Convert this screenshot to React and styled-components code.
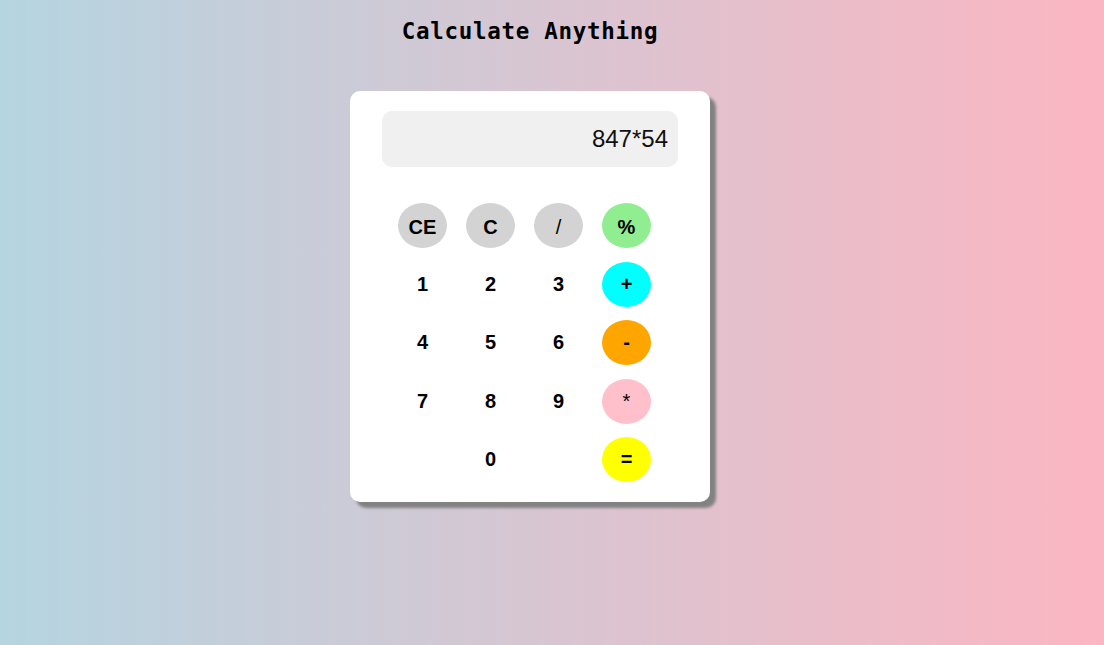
import React from "react";
import styled, { createGlobalStyle } from "styled-components";

const GlobalStyle = createGlobalStyle`
  html, body {
    margin: 0;
    padding: 0;
  }
  body {
    min-height: 645px;
    background: linear-gradient(to right, #b5d5e1, #fbb6c2);
    font-family: "Liberation Sans", Arial, sans-serif;
  }
`;

const Page = styled.div`
  width: 1060px;
  display: flex;
  flex-direction: column;
  align-items: center;
  min-height: 645px;
`;

const Title = styled.h1`
  margin: 17px 0 0;
  font-family: "DejaVu Sans Mono", monospace;
  font-size: 22.5px;
  letter-spacing: 0.7px;
  line-height: 28px;
  font-weight: bold;
  color: #000;
`;

const Card = styled.div`
  margin-top: 46px;
  width: 360px;
  box-sizing: border-box;
  padding: 20px 32px 20px;
  background: #fff;
  border-radius: 10px;
  box-shadow: 6px 6px 3px #828282;
`;

const Display = styled.div`
  height: 56px;
  background: #f0f0f0;
  border-radius: 10px;
  display: flex;
  align-items: center;
  justify-content: flex-end;
  padding-right: 10px;
  font-size: 24px;
  color: #111;
`;

const Keys = styled.div`
  margin: 36px 0 0 16px;
  display: grid;
  grid-template-columns: repeat(4, 49px);
  grid-auto-rows: 45px;
  column-gap: 19px;
  row-gap: 13.5px;
`;

const Key = styled.button`
  border: none;
  padding: ${(p) => (p.$op ? "4px 0 0" : "0")};
  border-radius: 50%;
  background: ${(p) => p.$bg || "#fff"};
  font-family: "Liberation Sans", Arial, sans-serif;
  font-size: 20px;
  font-weight: ${(p) => (p.$thin ? "normal" : "bold")};
  color: #000;
  display: flex;
  align-items: center;
  justify-content: center;
`;

const keys = [
  ["CE", "#d3d3d3"],
  ["C", "#d3d3d3"],
  ["/", "#d3d3d3", true],
  ["%", "#90ee90"],
  ["1"],
  ["2"],
  ["3"],
  ["+", "#00ffff"],
  ["4"],
  ["5"],
  ["6"],
  ["-", "#ffa500"],
  ["7"],
  ["8"],
  ["9"],
  ["*", "#ffc0cb", true],
  [""],
  ["0"],
  [""],
  ["=", "#ffff00"],
];

export default function App() {
  return (
    <>
      <GlobalStyle />
      <Page>
        <Title>Calculate Anything</Title>
        <Card>
          <Display>847*54</Display>
          <Keys>
            {keys.map(([label, bg, thin], i) =>
              label ? (
                <Key key={i} $bg={bg} $thin={thin} $op={i < 4}>
                  {label}
                </Key>
              ) : (
                <span key={i} />
              )
            )}
          </Keys>
        </Card>
      </Page>
    </>
  );
}
